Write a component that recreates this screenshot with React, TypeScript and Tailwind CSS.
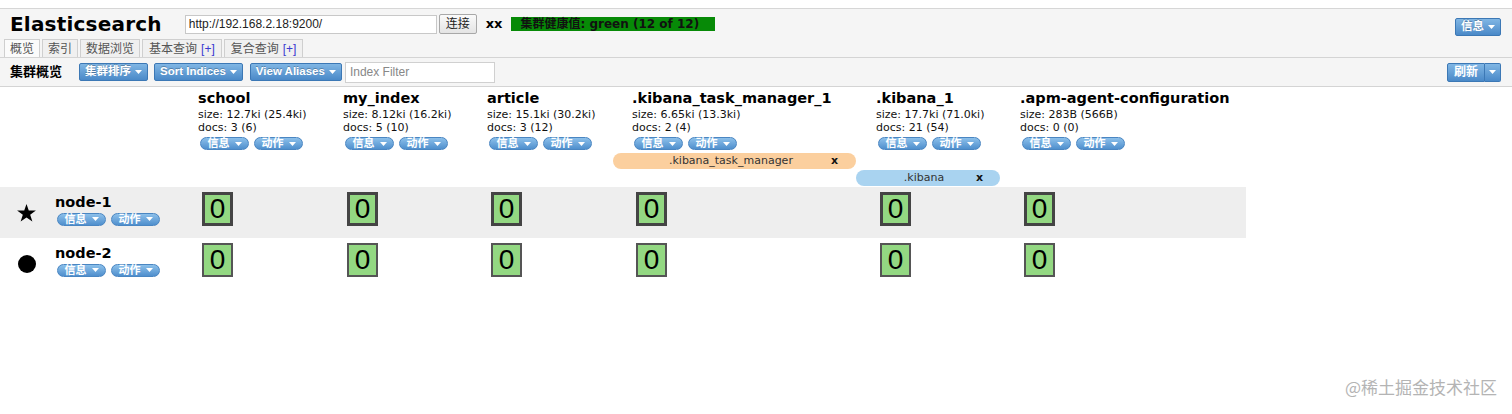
import React from 'react';

const sans = "font-['DejaVu_Sans','Noto_Sans_CJK_SC',sans-serif]";
const arial = "font-['Liberation_Sans','Noto_Sans_CJK_SC',sans-serif]";

const cols = 'grid grid-cols-[178px_145px_144px_145px_244px_144px_246px] w-[1246px]';

type Index = { name: string; size: string; docs: string };

const indices: Index[] = [
  { name: 'school', size: 'size: 12.7ki (25.4ki)', docs: 'docs: 3 (6)' },
  { name: 'my_index', size: 'size: 8.12ki (16.2ki)', docs: 'docs: 5 (10)' },
  { name: 'article', size: 'size: 15.1ki (30.2ki)', docs: 'docs: 3 (12)' },
  { name: '.kibana_task_manager_1', size: 'size: 6.65ki (13.3ki)', docs: 'docs: 2 (4)' },
  { name: '.kibana_1', size: 'size: 17.7ki (71.0ki)', docs: 'docs: 21 (54)' },
  { name: '.apm-agent-configuration', size: 'size: 283B (566B)', docs: 'docs: 0 (0)' },
];

function Caret({ className = '' }: { className?: string }) {
  return (
    <svg width="7" height="4" viewBox="0 0 7 4" className={`shrink-0 ${className}`}>
      <path d="M0 0h7L3.5 4z" fill="#fff" />
    </svg>
  );
}

function BlueButton({ label, className = '' }: { label: string; className?: string }) {
  return (
    <div
      className={`${arial} flex items-center gap-[4px] whitespace-nowrap h-[18px] px-[5px] rounded-[2px] border border-[#3c78b5] bg-linear-to-b from-[#80b6e4] to-[#4a89c8] text-white text-[11.5px] font-bold [text-shadow:0_-1px_0_rgba(0,0,0,0.25)] ${className}`}
    >
      <span>{label}</span>
      <Caret />
    </div>
  );
}

function PillButton({ label }: { label: string }) {
  return (
    <div
      className={`${sans} flex items-center justify-center gap-[5px] w-[49px] h-[13px] rounded-full bg-linear-to-b from-[#8cc0ea] to-[#4f8fcd] border border-[#4a86c2] text-white text-[11px] font-bold leading-none`}
    >
      <span>{label}</span>
      <Caret />
    </div>
  );
}

function Shard({ primary }: { primary: boolean }) {
  return (
    <div
      className={`${arial} flex items-center justify-center w-[31px] h-[34px] bg-[#93d882] text-black text-[28px] leading-none ${
        primary ? 'border-[3px] border-[#444]' : 'border-2 border-[#555]'
      }`}
    >
      0
    </div>
  );
}

function NodeIcon({ primary }: { primary: boolean }) {
  if (primary) {
    return (
      <svg width="19" height="18" viewBox="0 0 24 23">
        <path d="M12 0l2.9 8.2H24l-7.3 5.4 2.8 8.8L12 17.1l-7.5 5.3 2.8-8.8L0 8.2h9.1z" fill="#000" />
      </svg>
    );
  }
  return <div className="w-[18px] h-[18px] rounded-full bg-black" />;
}

function NodeRow({ name, primary }: { name: string; primary: boolean }) {
  return (
    <div className={`${cols} h-[51px] ${primary ? 'bg-[#eeeeee]' : 'bg-white'}`}>
      <div className="flex items-center">
        <div className="w-[55px] flex justify-center pr-[2px] mt-[1px]">
          <NodeIcon primary={primary} />
        </div>
        <div className="flex flex-col -mt-[7px]">
          <div className={`${sans} text-[14.5px] font-bold text-black leading-[18px]`}>{name}</div>
          <div className="flex gap-[5px] ml-[2px] mt-[2px]">
            <PillButton label="信息" />
            <PillButton label="动作" />
          </div>
        </div>
      </div>
      {indices.map((i) => (
        <div key={i.name} className="pl-[24px] pt-[5px]">
          <Shard primary={primary} />
        </div>
      ))}
    </div>
  );
}

export default function App() {
  return (
    <div className="relative w-[1512px] h-[414px] bg-white overflow-hidden text-black">
      {/* header */}
      <div className="mt-[8px] border-t border-[#d6d6d6] bg-[#f5f5f5]">
        <div className="flex items-center h-[30px] pl-[10px] pr-[11px]">
          <div className={`${sans} text-[20px] font-bold leading-none tracking-[0.2px]`}>Elasticsearch</div>
          <input
            readOnly
            value="http://192.168.2.18:9200/"
            className={`${arial} ml-[23px] w-[252px] h-[19px] border border-[#c8c8c8] bg-white px-[3px] text-[12px] text-[#222] outline-none`}
          />
          <div
            className={`${arial} ml-[2px] h-[20px] w-[38px] flex items-center justify-center border border-[#a8a8a8] rounded-[2px] bg-linear-to-b from-[#fafafa] to-[#e4e4e4] text-[12px] text-[#222]`}
          >
            连接
          </div>
          <div className={`${sans} ml-[9px] text-[13px] font-bold`}>xx</div>
          <div className={`${sans} ml-[8px] h-[14px] w-[204px] bg-[#078a07] pl-[10px] text-[12px] font-bold leading-[14px] text-[#111]`}>
            集群健康值: green (12 of 12)
          </div>
          <div className="flex-1" />
          <BlueButton label="信息" className="mt-[6px]" />
        </div>
        <div className="flex items-end gap-[2px] pl-[4px] h-[18px]">
          {['概览', '索引', '数据浏览'].map((t, idx) => (
            <div
              key={t}
              className={`${arial} h-[18px] px-[5px] flex items-center border border-b-0 border-[#cfcfcf] text-[12px] text-[#555] ${
                idx === 0 ? 'bg-[#fbfbfb]' : 'bg-[#f0f0f0]'
              }`}
            >
              {t}
            </div>
          ))}
          {['基本查询', '复合查询'].map((t) => (
            <div
              key={t}
              className={`${arial} h-[18px] px-[6px] flex items-center border border-b-0 border-[#cfcfcf] bg-[#f0f0f0] text-[12px] text-[#555]`}
            >
              {t}
              <span className="ml-[4px] text-[#3a3ad0]">[+]</span>
            </div>
          ))}
        </div>
      </div>

      {/* toolbar */}
      <div className="flex items-center h-[30px] border-t border-b border-[#d4d4d4] bg-[#f5f5f5] pl-[10px] pr-[11px]">
        <div className={`${arial} text-[13px] font-bold w-[69px]`}>集群概览</div>
        <BlueButton label="集群排序" />
        <BlueButton label="Sort Indices" className="ml-[6px]" />
        <BlueButton label="View Aliases" className="ml-[7px]" />
        <input
          readOnly
          placeholder="Index Filter"
          className={`${arial} ml-[3px] w-[150px] h-[21px] border border-[#d0d0d0] bg-white px-[4px] text-[12px] placeholder:text-[#888] outline-none`}
        />
        <div className="flex-1" />
        <div className="flex">
          <div
            className={`${arial} h-[19px] px-[6px] flex items-center rounded-l-[2px] border border-[#3c78b5] bg-linear-to-b from-[#80b6e4] to-[#4a89c8] text-white text-[12px] font-bold`}
          >
            刷新
          </div>
          <div className="h-[19px] w-[16px] flex items-center justify-center rounded-r-[2px] border border-l-0 border-[#3c78b5] bg-linear-to-b from-[#80b6e4] to-[#4a89c8]">
            <Caret />
          </div>
        </div>
      </div>

      {/* index headers */}
      <div className={`${cols} pt-[2px]`}>
        <div />
        {indices.map((i) => (
          <div key={i.name} className="pl-[20px]">
            <div className={`${sans} text-[14.5px] font-bold leading-[18px] whitespace-nowrap`}>{i.name}</div>
            <div className={`${sans} text-[11px] leading-[13px] text-[#111] mt-[1px]`}>{i.size}</div>
            <div className={`${sans} text-[11px] leading-[13px] text-[#111]`}>{i.docs}</div>
            <div className="flex gap-[5px] ml-[2px] mt-[3px]">
              <PillButton label="信息" />
              <PillButton label="动作" />
            </div>
          </div>
        ))}
      </div>

      {/* aliases */}
      <div className={`${cols} mt-[3px] h-[17px]`}>
        <div className="col-start-5 ml-[1px] flex items-center h-[16px] rounded-[8px] bg-[#fbcf9e]">
          <span className={`${sans} flex-1 text-center text-[11px] text-[#333] pl-[18px]`}>.kibana_task_manager</span>
          <span className={`${sans} text-[11px] font-bold text-[#111] pr-[18px]`}>x</span>
        </div>
      </div>
      <div className={`${cols} h-[17px]`}>
        <div className="col-start-6 flex items-center h-[16px] rounded-[8px] bg-[#a9d3f0]">
          <span className={`${sans} flex-1 text-center text-[11px] text-[#333] pl-[16px]`}>.kibana</span>
          <span className={`${sans} text-[11px] font-bold text-[#111] pr-[17px]`}>x</span>
        </div>
      </div>

      {/* nodes */}
      <NodeRow name="node-1" primary />
      <NodeRow name="node-2" primary={false} />

      <div className="absolute right-[15px] bottom-[15px] font-['Noto_Sans_CJK_SC',sans-serif] text-[17px] text-[#b4b4b4]">
        @稀土掘金技术社区
      </div>
    </div>
  );
}
